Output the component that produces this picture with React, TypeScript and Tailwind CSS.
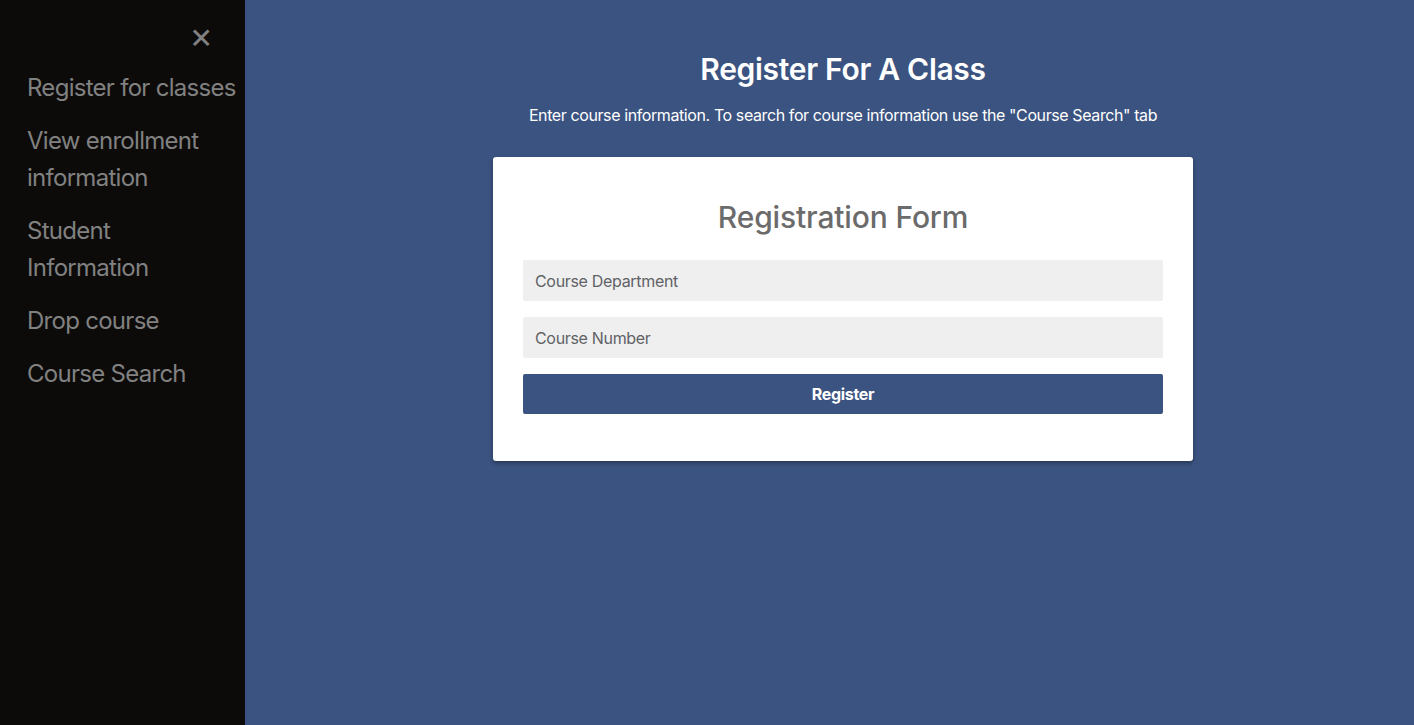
import React from "react";

export default function App() {
  const links = [
    ["Register for classes"],
    ["View enrollment", "information"],
    ["Student", "Information"],
    ["Drop course"],
    ["Course Search"],
  ];
  return (
    <div
      className="flex h-[725px] w-full overflow-hidden"
      style={{ fontFamily: "Inter, 'Noto Sans', sans-serif" }}
    >
      <aside className="relative w-[245px] shrink-0 bg-[#0c0b0a] pt-[61px]">
        <span className="absolute right-[32px] top-[13px] text-[36px] leading-[44px] text-[#818181]">
          ×
        </span>
        <nav className="flex flex-col">
          {links.map((l) => (
            <a
              key={l.join(" ")}
              className="block py-[8px] pl-[27px] pr-0 text-[24px] leading-[37px] tracking-[-0.03em] text-[#818181]"
            >
              {l.map((line) => (
                <span key={line} className="block whitespace-nowrap">
                  {line}
                </span>
              ))}
            </a>
          ))}
        </nav>
      </aside>
      <main className="flex flex-1 flex-col items-center bg-[#3b5380] pl-[27px] pt-[50px]">
        <h1 className="text-[30px] font-semibold leading-[38px] tracking-[-0.01em] text-white">
          Register For A Class
        </h1>
        <p className="mt-[17px] text-[16px] leading-[20px] tracking-[-0.025em] text-white">
          Enter course information. To search for course information use the "Course Search" tab
        </p>
        <div className="mt-[32px] w-[700px] rounded-[3px] bg-white px-[30px] pb-[47px] pt-[40px] shadow-[0_2px_4px_rgba(0,0,0,0.35)]">
          <h2 className="text-center text-[30px] font-medium leading-[40px] tracking-[-0.005em] text-[#6b6b6b]">
            Registration Form
          </h2>
          <div className="mt-[23px] flex flex-col gap-[16px]">
            <div className="flex h-[41px] items-center rounded-[2px] bg-[#efefef] px-[12px] text-[16px] tracking-[-0.02em] text-[#5f6266]">
              Course Department
            </div>
            <div className="flex h-[41px] items-center rounded-[2px] bg-[#efefef] px-[12px] text-[16px] tracking-[-0.02em] text-[#5f6266]">
              Course Number
            </div>
            <button className="h-[40px] rounded-[2px] bg-[#3b5380] text-[16px] font-bold tracking-[-0.02em] text-white">
              Register
            </button>
          </div>
        </div>
      </main>
    </div>
  );
}
